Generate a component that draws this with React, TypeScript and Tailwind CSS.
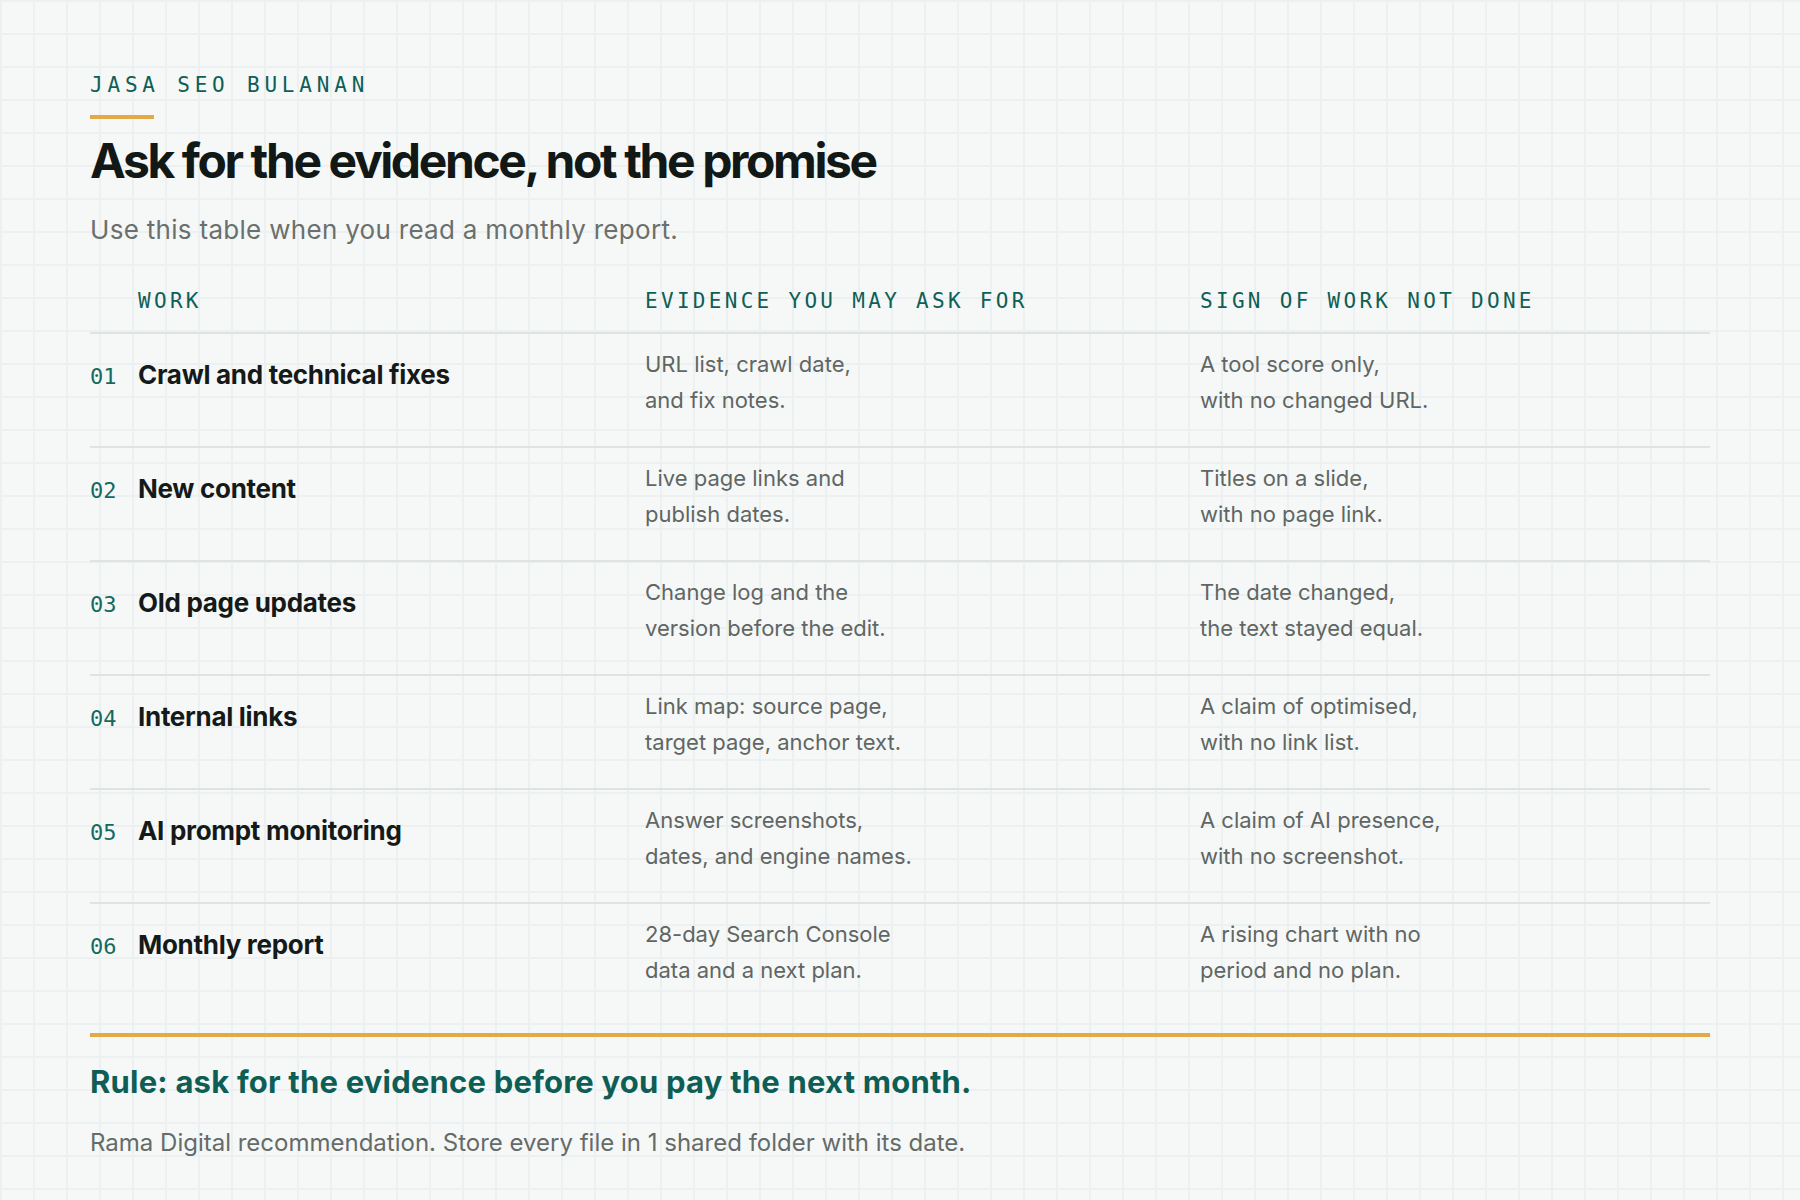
const ROWS = [
  {
    no: "01",
    work: "Crawl and technical fixes",
    evidence: ["URL list, crawl date,", "and fix notes."],
    sign: ["A tool score only,", "with no changed URL."],
  },
  {
    no: "02",
    work: "New content",
    evidence: ["Live page links and", "publish dates."],
    sign: ["Titles on a slide,", "with no page link."],
  },
  {
    no: "03",
    work: "Old page updates",
    evidence: ["Change log and the", "version before the edit."],
    sign: ["The date changed,", "the text stayed equal."],
  },
  {
    no: "04",
    work: "Internal links",
    evidence: ["Link map: source page,", "target page, anchor text."],
    sign: ["A claim of optimised,", "with no link list."],
  },
  {
    no: "05",
    work: "AI prompt monitoring",
    evidence: ["Answer screenshots,", "dates, and engine names."],
    sign: ["A claim of AI presence,", "with no screenshot."],
  },
  {
    no: "06",
    work: "Monthly report",
    evidence: ["28-day Search Console", "data and a next plan."],
    sign: ["A rising chart with no", "period and no plan."],
  },
];

const mono = "font-['DejaVu_Sans_Mono',monospace]";

export default function App() {
  return (
    <div className="min-h-screen bg-[#f6f8f8] bg-[linear-gradient(to_right,#edf0f0_2px,transparent_2px),linear-gradient(to_bottom,#edf0f0_2px,transparent_2px)] bg-[size:33px_33px] font-['Inter',sans-serif] text-[#141917]">
      <main className="px-[90px] pt-[74px] pb-10">
        <p className={`${mono} text-[21px] leading-[22px] tracking-[4.8px] text-[#0f5f56]`}>
          JASA SEO BULANAN
        </p>
        <div className="mt-[19px] h-1 w-16 bg-[#e3a947]" />
        <h1 className="mt-[18px] text-[48px] leading-[48px] font-bold tracking-[-2.4px] text-[#121816]">
          Ask for the evidence, not the promise
        </h1>
        <p className="mt-[32px] text-[26px] leading-[26px] tracking-[0.3px] text-[#69706d]">
          Use this table when you read a monthly report.
        </p>

        <section className="mt-[47px]">
          <div className={`grid grid-cols-[555px_555px_1fr] border-b-2 border-[#dfe3e2] pb-[20px] ${mono} text-[21px] leading-[22px] tracking-[3.3px] text-[#0f5f56]`}>
            <div className="pl-[48px]">WORK</div>
            <div>EVIDENCE YOU MAY ASK FOR</div>
            <div>SIGN OF WORK NOT DONE</div>
          </div>

          {ROWS.map((row, i) => (
            <div
              key={row.no}
              className={`grid h-[114px] grid-cols-[555px_555px_1fr] border-b-2 ${
                i === ROWS.length - 1 ? "border-transparent" : "border-[#dfe3e2]"
              }`}
            >
              <div className="flex items-baseline pt-[23px] leading-[36px]">
                <span className={`${mono} w-[48px] shrink-0 text-[22px] text-[#156a60]`}>{row.no}</span>
                <span className="text-[26px] font-bold tracking-[-0.3px] text-[#151a18]">{row.work}</span>
              </div>
              <div className="pt-3 text-[22px] leading-[36px] text-[#5f6663]">
                {row.evidence.map((line) => (
                  <div key={line}>{line}</div>
                ))}
              </div>
              <div className="pt-3 text-[22px] leading-[36px] text-[#5f6663]">
                {row.sign.map((line) => (
                  <div key={line}>{line}</div>
                ))}
              </div>
            </div>
          ))}
        </section>

        <div className="mt-[15px] h-1 bg-[#e3a947]" />
        <p className="mt-[29px] text-[31px] leading-[31px] font-bold tracking-[0.2px] text-[#0e5e55]">
          Rule: ask for the evidence before you pay the next month.
        </p>
        <p className="mt-[34px] text-[24px] leading-[24px] text-[#646b68]">
          Rama Digital recommendation. Store every file in 1 shared folder with its date.
        </p>
      </main>
    </div>
  );
}
